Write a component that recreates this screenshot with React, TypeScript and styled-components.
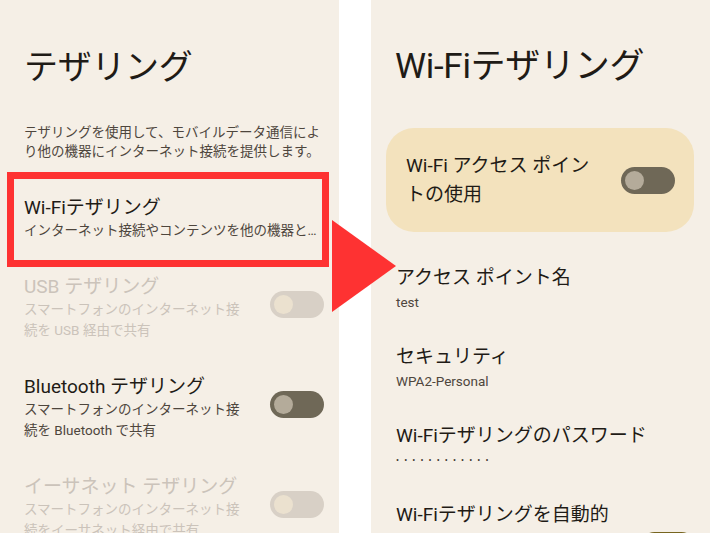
import React from "react";
import styled, { createGlobalStyle } from "styled-components";

const GlobalStyle = createGlobalStyle`
  html, body {
    margin: 0;
    padding: 0;
    background: #ffffff;
  }
  body {
    font-family: Roboto, "Noto Sans CJK JP", sans-serif;
    -webkit-font-smoothing: antialiased;
  }
`;

const bg = "#f5efe6";
const textMain = "#1f1b16";
const textSub = "#4e463d";
const textOff = "#cbc3ba";

const Stage = styled.div`
  position: relative;
  width: 710px;
  height: 533px;
  overflow: hidden;
  display: flex;
  gap: 32px;
  background: #ffffff;
`;

const Screen = styled.div`
  width: 339px;
  height: 100%;
  background: ${bg};
  display: flex;
  flex-direction: column;
  overflow: hidden;
  & > * {
    flex: none;
  }
`;

const PageTitle = styled.h1<{ $size?: number }>`
  margin: 45px 0 0 24px;
  font-size: ${({ $size }) => $size ?? 34}px;
  line-height: 44px;
  font-weight: 400;
  color: ${textMain};
  letter-spacing: -0.3px;
`;

const Intro = styled.p`
  margin: 34px 14px 11px 24px;
  font-size: 13.5px;
  line-height: 19px;
  color: ${textSub};
`;

// left list row
const Row = styled.div<{ $highlight?: boolean }>`
  display: flex;
  align-items: flex-start;
  box-sizing: border-box;
  ${({ $highlight }) =>
    $highlight
      ? `
    margin: 0 10px 8px 7px;
    border: 7px solid #fe3232;
    padding: 17px 2px 19px 10px;
  `
      : `
    height: 100px;
    padding: 0 15px 0 24px;
  `}
`;

const RowText = styled.div<{ $gap?: number }>`
  flex: 1;
  min-width: 0;
  padding-right: ${({ $gap }) => $gap ?? 0}px;
`;

const RowTitle = styled.div<{ $off?: boolean }>`
  font-size: 19px;
  line-height: 24px;
  color: ${({ $off }) => ($off ? textOff : textMain)};
`;

const RowSub = styled.div<{ $off?: boolean; $clip?: boolean }>`
  font-size: 13.5px;
  line-height: 21px;
  color: ${({ $off }) => ($off ? textOff : textSub)};
  ${({ $clip }) =>
    $clip &&
    `
    white-space: nowrap;
    overflow: hidden;
    text-overflow: ellipsis;
  `}
`;

const Toggle = styled.div<{ $state: "on" | "disabled" | "gold"; $top?: number }>`
  flex: none;
  width: 54px;
  height: 27px;
  border-radius: 14px;
  margin-top: ${({ $top }) => $top ?? 16}px;
  position: relative;
  background: ${({ $state }) =>
    $state === "disabled" ? "#d8d0c6" : $state === "gold" ? "#77651f" : "#6f6857"};
  &::after {
    content: "";
    position: absolute;
    left: 4px;
    top: 4px;
    width: 19px;
    height: 19px;
    border-radius: 50%;
    background: ${({ $state }) =>
      $state === "disabled" ? "#ebe1cf" : $state === "gold" ? "#fff4d6" : "#b4ab9a"};
  }
`;

// right side
const Card = styled.div`
  margin: 39px 16px 32px 15px;
  height: 104px;
  box-sizing: border-box;
  border-radius: 28px;
  background: #f3e2bd;
  display: flex;
  align-items: center;
  justify-content: space-between;
  padding: 0 19px 0 20px;
`;

const CardLabel = styled.div`
  width: 196px;
  font-size: 19px;
  line-height: 29px;
  color: ${textMain};
`;

const Pref = styled.div`
  display: flex;
  align-items: flex-start;
  height: 79px;
  box-sizing: border-box;
  padding: 0 15px 0 25px;
`;

const PrefTitle = styled.div`
  font-size: 19px;
  line-height: 28px;
  color: ${textMain};
`;

const PrefValue = styled.div<{ $dots?: boolean }>`
  font-size: 13.5px;
  line-height: 20px;
  color: ${textSub};
  ${({ $dots }) =>
    $dots &&
    `
    font-size: 9px;
    letter-spacing: 5.1px;
    color: #3f382f;
  `}
`;

const Arrow = styled.svg`
  position: absolute;
  left: 332px;
  top: 220px;
`;

type Item = { title: string; sub: string; off?: boolean };

const items: Item[] = [
  {
    title: "USB テザリング",
    sub: "スマートフォンのインターネット接続を USB 経由で共有",
    off: true,
  },
  {
    title: "Bluetooth テザリング",
    sub: "スマートフォンのインターネット接続を Bluetooth で共有",
  },
  {
    title: "イーサネット テザリング",
    sub: "スマートフォンのインターネット接続をイーサネット経由で共有",
    off: true,
  },
];

const prefs = [
  { title: "アクセス ポイント名", value: "test" },
  { title: "セキュリティ", value: "WPA2-Personal" },
  { title: "Wi-Fiテザリングのパスワード", value: "••••••••••••", dots: true },
];

export default function App() {
  return (
    <>
      <GlobalStyle />
      <Stage>
        <Screen>
          <PageTitle>テザリング</PageTitle>
          <Intro>
            テザリングを使用して、モバイルデータ通信により他の機器にインターネット接続を提供します。
          </Intro>
          <Row $highlight>
            <RowText>
              <RowTitle>Wi-Fiテザリング</RowTitle>
              <RowSub $clip>インターネット接続やコンテンツを他の機器と共有します</RowSub>
            </RowText>
          </Row>
          {items.map((it) => (
            <Row key={it.title}>
              <RowText $gap={20}>
                <RowTitle $off={it.off}>{it.title}</RowTitle>
                <RowSub $off={it.off}>{it.sub}</RowSub>
              </RowText>
              <Toggle $state={it.off ? "disabled" : "on"} />
            </Row>
          ))}
        </Screen>

        <Screen>
          <PageTitle $size={35}>Wi-Fiテザリング</PageTitle>
          <Card>
            <CardLabel>Wi-Fi アクセス ポイントの使用</CardLabel>
            <Toggle $state="on" $top={0} />
          </Card>
          {prefs.map((p) => (
            <Pref key={p.title}>
              <RowText>
                <PrefTitle>{p.title}</PrefTitle>
                <PrefValue $dots={p.dots}>{p.value}</PrefValue>
              </RowText>
            </Pref>
          ))}
          <Pref>
            <RowText $gap={20}>
              <PrefTitle>Wi-Fiテザリングを自動的にOFF</PrefTitle>
            </RowText>
            <Toggle $state="gold" $top={31} />
          </Pref>
        </Screen>

        <Arrow width="64" height="92" viewBox="0 0 64 92">
          <polygon points="0,0 64,46 0,92" fill="#fe3232" />
        </Arrow>
      </Stage>
    </>
  );
}
